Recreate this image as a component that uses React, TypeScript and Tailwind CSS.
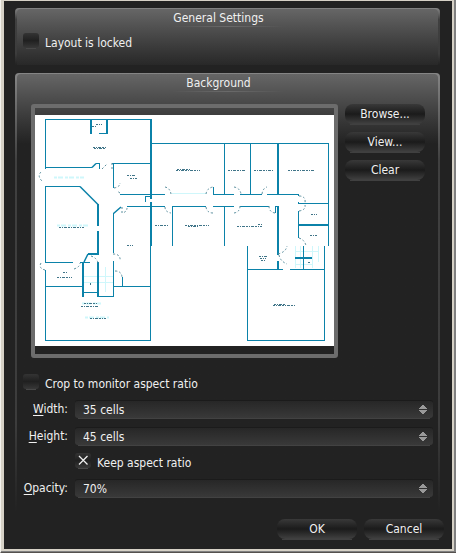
import { useState, type ReactNode } from "react";

const pill =
  "h-5 w-20 rounded-lg bg-linear-to-b from-[#393939] via-[#1b1b1b] via-50% to-[#414141] text-center leading-5";

function PillButton({ children }: { children: ReactNode }) {
  return (
    <div className="flex w-20 flex-col items-center">
      <button type="button" className={pill}>
        {children}
      </button>
      <span className="h-px w-[70px] bg-[#404040]" />
    </div>
  );
}

function Group({ title, className, children }: { title: string; className: string; children: ReactNode }) {
  return (
    <section className="rounded-t-sm bg-[linear-gradient(to_bottom,#858585_0%,#404040_20%,#3c3c3c_80%,#222222_100%)] px-0.5 pt-px">
      <div className={`rounded-t-sm bg-[#222222] bg-linear-to-b from-[#666666] ${className}`}>
        <h2 className="h-[17px] pt-px pr-[18px] text-center leading-4">{title}</h2>
        <div className="mx-auto h-px w-28 bg-linear-to-r from-transparent via-[#6a6a6a] to-transparent" />
        {children}
      </div>
    </section>
  );
}

function Check({ id, label, initial = false }: { id: string; label: string; initial?: boolean }) {
  const [on, setOn] = useState(initial);
  return (
    <div className="flex h-4 items-start gap-1.5">
      <span className="flex w-4 flex-col items-center">
        <span className="grid h-[15px] w-4">
          <input
            id={id}
            type="checkbox"
            checked={on}
            onChange={(e) => setOn(e.target.checked)}
            className="col-start-1 row-start-1 h-[15px] w-4 appearance-none rounded-[3px] bg-linear-to-b from-[#343434] via-[#202020] via-50% to-[#383838]"
          />
          {on && (
            <svg viewBox="0 0 16 15" className="pointer-events-none col-start-1 row-start-1 h-[15px] w-4">
              <path d="M4 3 L12.500 11.500 M12.500 3 L4 11.500" stroke="#eeeeee" strokeWidth="1.300" />
            </svg>
          )}
        </span>
        <span className="h-px w-2.5 bg-[#484848]" />
      </span>
      <label htmlFor={id} className="pt-0.5 leading-4">
        {label}
      </label>
    </div>
  );
}

function Spin({ id, hot, rest, value }: { id: string; hot: string; rest: string; value: string }) {
  return (
    <div className="flex h-[19px] gap-[7px]">
      <label htmlFor={id} className="w-[45px] text-right leading-[18px] whitespace-nowrap">
        <span className="underline underline-offset-2">{hot}</span>
        {rest}
      </label>
      <div className="flex flex-1 flex-col">
        <div className="flex h-[18px] items-center rounded-[3px] border-t border-[#1b1b1b] bg-linear-to-b from-[#272727] to-[#393939] pr-1.5 pl-2">
          <input id={id} type="text" defaultValue={value} className="h-[18px] min-w-0 flex-1 bg-transparent outline-none" />
          <svg viewBox="0 0 8 11" className="h-[11px] w-2" fill="#999999" shapeRendering="crispEdges">
            <path d="M0 5 L4 0 L8 5 Z M0 6 L8 6 L4 11 Z" />
          </svg>
        </div>
        <span className="mx-[3px] h-px bg-[#424242]" />
      </div>
    </div>
  );
}

function FloorPlan() {
  return (
    <svg viewBox="35 115 299 231" role="img" aria-label="Floor plan" className="block w-full bg-white" fill="none">
      <g stroke="#cff7fb" strokeWidth="1">
        <path d="M172 193.500H206M83 276.500H113M83 282.500H113M105.500 267V292M295.500 246V268M300.500 246V268M312.500 246V268M318.500 246V262M295 251.500H318M295 264.500H312" />
        <path d="M54 177.500H84M57 225.500H88M82 303.500H101M85 317.500H109" strokeWidth="2" strokeDasharray="3 1 5 2" />
      </g>
      <g stroke="#0b82a9" strokeWidth="1" shapeRendering="crispEdges">
        <path d="M45.500 169V119.500H151M99 133.500H107M45 167.500H92M96 163.500H100M99.500 163V169M112 163.500H151M113.500 163V188M120 194.500H165M45 186.500H80M45.500 186V262.500H73M80 262.500H90M127 206.500H165M113.500 213V253M113.500 261V296.500H98M45.500 270V340.500H150.500V246M45 286.500H83M113 286.500H151M122.500 277V286M83 292.500H98" />
        <path d="M151 143.500H328.500V246M224.500 143V194M250.500 143V194M213.500 187V194.500H234M240 194.500H262M267 194.500H298.500V196M172 206.500H206M213 206.500H234M240 206.500H269M275 206.500H279M172.500 206V246M224.500 206V246M275.500 206V213M298.500 202V204M298 203.500H329M298.500 211V238M145 196.500H151M145 196V202" />
        <path d="M247.500 246V340.500H324.500V246M247 269.500H283M290 269.500H325M303.500 246V269" />
        <path d="M151 119V199M151 202V246M91 119V134M107 119V134M98 204V226M98 231V254H88M83 262V297M98 262V297M278 143V194M278 206V255M278 261V269M298 225H329M295 258H312" strokeWidth="2" />
      </g>
      <g stroke="#0b82a9" strokeWidth="1.500">
        <path d="M92 167.500L96 163.500M80 186.500L98 204.500M121 207L113.500 213.500M88 254L84 262" />
      </g>
      <g stroke="#5b8f9e" strokeWidth="1" strokeDasharray="2 2">
        <path d="M41 172Q37 176 42 181M112 163V170M102 169L107 164M114 188Q120 187 120 183M120 193L117 191M122 207V213Q127 212 127 208M41 263Q38 268 45 270M74 269Q80 267 80 263M91 256Q97 258 98 263M113 254Q121 254 120 261M115 271Q122 271 122 278" />
        <path d="M165 187Q170 188 171 194M206 194Q207 188 213 187M234 187Q240 188 241 194M262 194Q263 188 267 187M165 207Q165 212 171 213M206 207Q207 213 213 213M234 213Q240 212 240 206M269 206Q269 212 275 213M299 196Q306 196 305 203M299 211Q306 210 305 205M299 238Q305 240 306 246M278 254Q286 252 287 246M279 255Q280 261 287 264" />
      </g>
      <g stroke="#3f7488" strokeWidth="1" strokeDasharray="2 1 1 1 3 1" shapeRendering="crispEdges">
        <path d="M96 124.500H102M92 126.500H96M93 147.500H107M94 148.500H105M127 175.500H136M130 178.500H137M59 227.500H84M63 272.500H68M57 277.500H72M84 303.500H97M81 306.500H99M90 318.500H106M127 245.500H133M90.500 283V286" />
        <path d="M176 170.500H200M177 169.500H190M228 170.500H245M254 170.500H273M288 170.500H314M155 225.500H169M185 225.500H209M188 226.500H198M237 226.500H262M258 224.500H263M311 214.500H317M310 235.500H317M259 256.500H267M260 258.500H266M261 260.500H266M273 305.500H296M274 304.500H286M308 262.500H310" />
      </g>
    </svg>
  );
}

export default function App() {
  return (
    <div className="flex min-h-screen flex-col border-b border-l border-[#55514e] border-l-[#f4f2ed] bg-[#808080] pr-0.5 pb-px font-['DejaVu_Sans_Condensed','DejaVu_Sans',sans-serif] text-[12px] text-[#f0f0f0]">
      <main className="flex flex-1 flex-col border-t border-r-2 border-b-2 border-l-[3px] border-[#d6d1c6] bg-[#222222] pt-[7px]">
        <div className="flex flex-col gap-2 pr-3 pl-[11px]">
          <Group title="General Settings" className="h-[56px] to-[#282828]">
            <div className="pt-[6px] pl-1.5">
              <Check id="locked" label="Layout is locked" />
            </div>
          </Group>
          <Group title="Background" className="h-[438px] to-[#222222] to-[70px]">
            <div className="flex items-start gap-[7px] pt-3 pr-[13px] pl-3.5">
              <div className="flex-1 rounded-[3px] border-4 border-[#6c6c6c] pt-[7px] pb-2">
                <FloorPlan />
              </div>
              <div className="flex flex-col gap-[7px]">
                <PillButton>Browse...</PillButton>
                <PillButton>View...</PillButton>
                <PillButton>Clear</PillButton>
              </div>
            </div>
            <div className="flex flex-col gap-2.5 pt-4 pr-[5px] pl-1.5">
              <Check id="crop" label="Crop to monitor aspect ratio" />
              <div className="flex flex-col gap-2">
                <Spin id="width" hot="W" rest="idth:" value="35 cells" />
                <Spin id="height" hot="H" rest="eight:" value="45 cells" />
              </div>
              <div className="-mt-[3px] pl-[52px]">
                <Check id="keep" label="Keep aspect ratio" initial />
              </div>
              <Spin id="opacity" hot="O" rest="pacity:" value="70%" />
            </div>
          </Group>
        </div>
        <div className="flex justify-end gap-[7px] pt-[7px] pr-2 pb-2">
          <PillButton>OK</PillButton>
          <PillButton>Cancel</PillButton>
        </div>
      </main>
    </div>
  );
}
